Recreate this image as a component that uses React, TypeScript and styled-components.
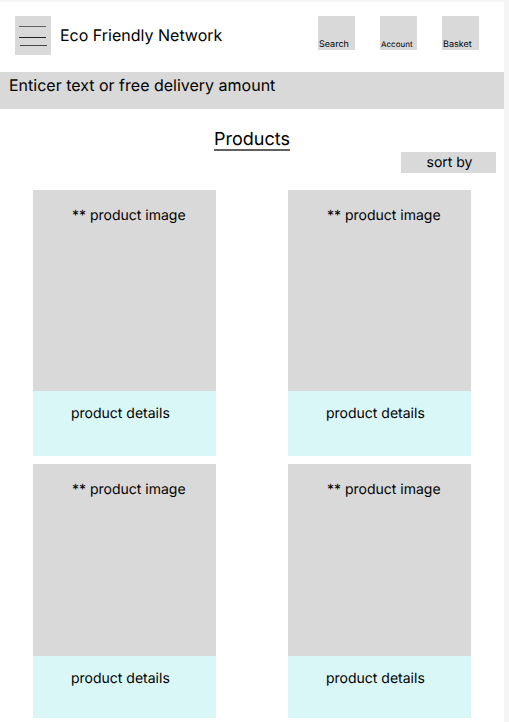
import React from "react";
import styled, { createGlobalStyle } from "styled-components";

const GlobalStyle = createGlobalStyle`
  * { box-sizing: border-box; }
  body {
    margin: 0;
    background: #f5f5f5;
    color: #000;
    font-family: Inter, "Liberation Sans", sans-serif;
    font-weight: 400;
    text-rendering: geometricPrecision;
  }
  button { font: inherit; color: inherit; text-rendering: inherit; border: 0; padding: 0; border-radius: 0; cursor: pointer; }
  h1, h2, p { margin: 0; font-weight: inherit; }
`;

const Page = styled.div`
  margin: 2px 5px 0 0;
  min-height: calc(100vh - 2px);
  background: #fff;
`;

const Header = styled.header`
  display: flex;
  align-items: flex-start;
  padding: 14px 25px 17px 15px;
`;

const MenuButton = styled.button`
  width: 36px;
  height: 39px;
  background: #d9d9d9;
  svg { display: block; }
`;

const Brand = styled.h1`
  flex: 1;
  margin-left: 9px;
  font-size: 16px;
  line-height: 38px;
  white-space: nowrap;
`;

const Tools = styled.nav`
  display: flex;
  gap: 25px;
`;

const Tool = styled.button<{ $small?: boolean }>`
  display: flex;
  align-items: flex-end;
  justify-content: flex-start;
  width: 37px;
  height: 34px;
  padding-left: 1px;
  background: #d9d9d9;
  font-size: ${(p) => (p.$small ? 8 : 9)}px;
  line-height: 11px;
`;

const Banner = styled.p`
  height: 37px;
  padding-left: 9px;
  background: #d9d9d9;
  font-size: 16px;
  line-height: 27px;
`;

const Title = styled.h2`
  width: fit-content;
  height: 22px;
  margin: 20px auto 0;
  border-bottom: 2px solid #606060;
  font-size: 18px;
  line-height: 22px;
`;

const SortRow = styled.div`
  display: flex;
  justify-content: flex-end;
  padding: 1px 8px 0 0;
`;

const SortButton = styled.button`
  width: 95px;
  height: 21px;
  padding-left: 2px;
  background: #d9d9d9;
  font-size: 14px;
  line-height: 21px;
`;

const Grid = styled.main`
  display: grid;
  grid-template-columns: 1fr 1fr;
  gap: 8px 72px;
  padding: 17px 33px 4px;
`;

const Card = styled.article`
  font-size: 14px;
  line-height: 18px;
`;

const ProductImage = styled.div<{ $height: number }>`
  height: ${(p) => p.$height}px;
  padding: 17px 0 0 39px;
  background: #d9d9d9;
`;

const Details = styled.div<{ $height: number }>`
  height: ${(p) => p.$height}px;
  padding: 14px 0 0 38px;
  background: #d9f7f7;
`;

const products = [
  { id: 1, image: 201, details: 65 },
  { id: 2, image: 201, details: 65 },
  { id: 3, image: 192, details: 62 },
  { id: 4, image: 192, details: 62 },
];

export default function App() {
  return (
    <>
      <GlobalStyle />
      <Page>
        <Header>
          <MenuButton aria-label="Menu">
            <svg width="36" height="39" strokeWidth="1">
              <path d="M4 10.5H31" stroke="#606060" />
              <path d="M4 21.5H31" stroke="#222" />
              <path d="M5 29.5H32" stroke="#444" />
            </svg>
          </MenuButton>
          <Brand>Eco Friendly Network</Brand>
          <Tools>
            <Tool>Search</Tool>
            <Tool $small>Account</Tool>
            <Tool>Basket</Tool>
          </Tools>
        </Header>
        <Banner>Enticer text or free delivery amount</Banner>
        <Title>Products</Title>
        <SortRow>
          <SortButton>sort by</SortButton>
        </SortRow>
        <Grid>
          {products.map((p) => (
            <Card key={p.id}>
              <ProductImage $height={p.image}>** product image</ProductImage>
              <Details $height={p.details}>product details</Details>
            </Card>
          ))}
        </Grid>
      </Page>
    </>
  );
}
